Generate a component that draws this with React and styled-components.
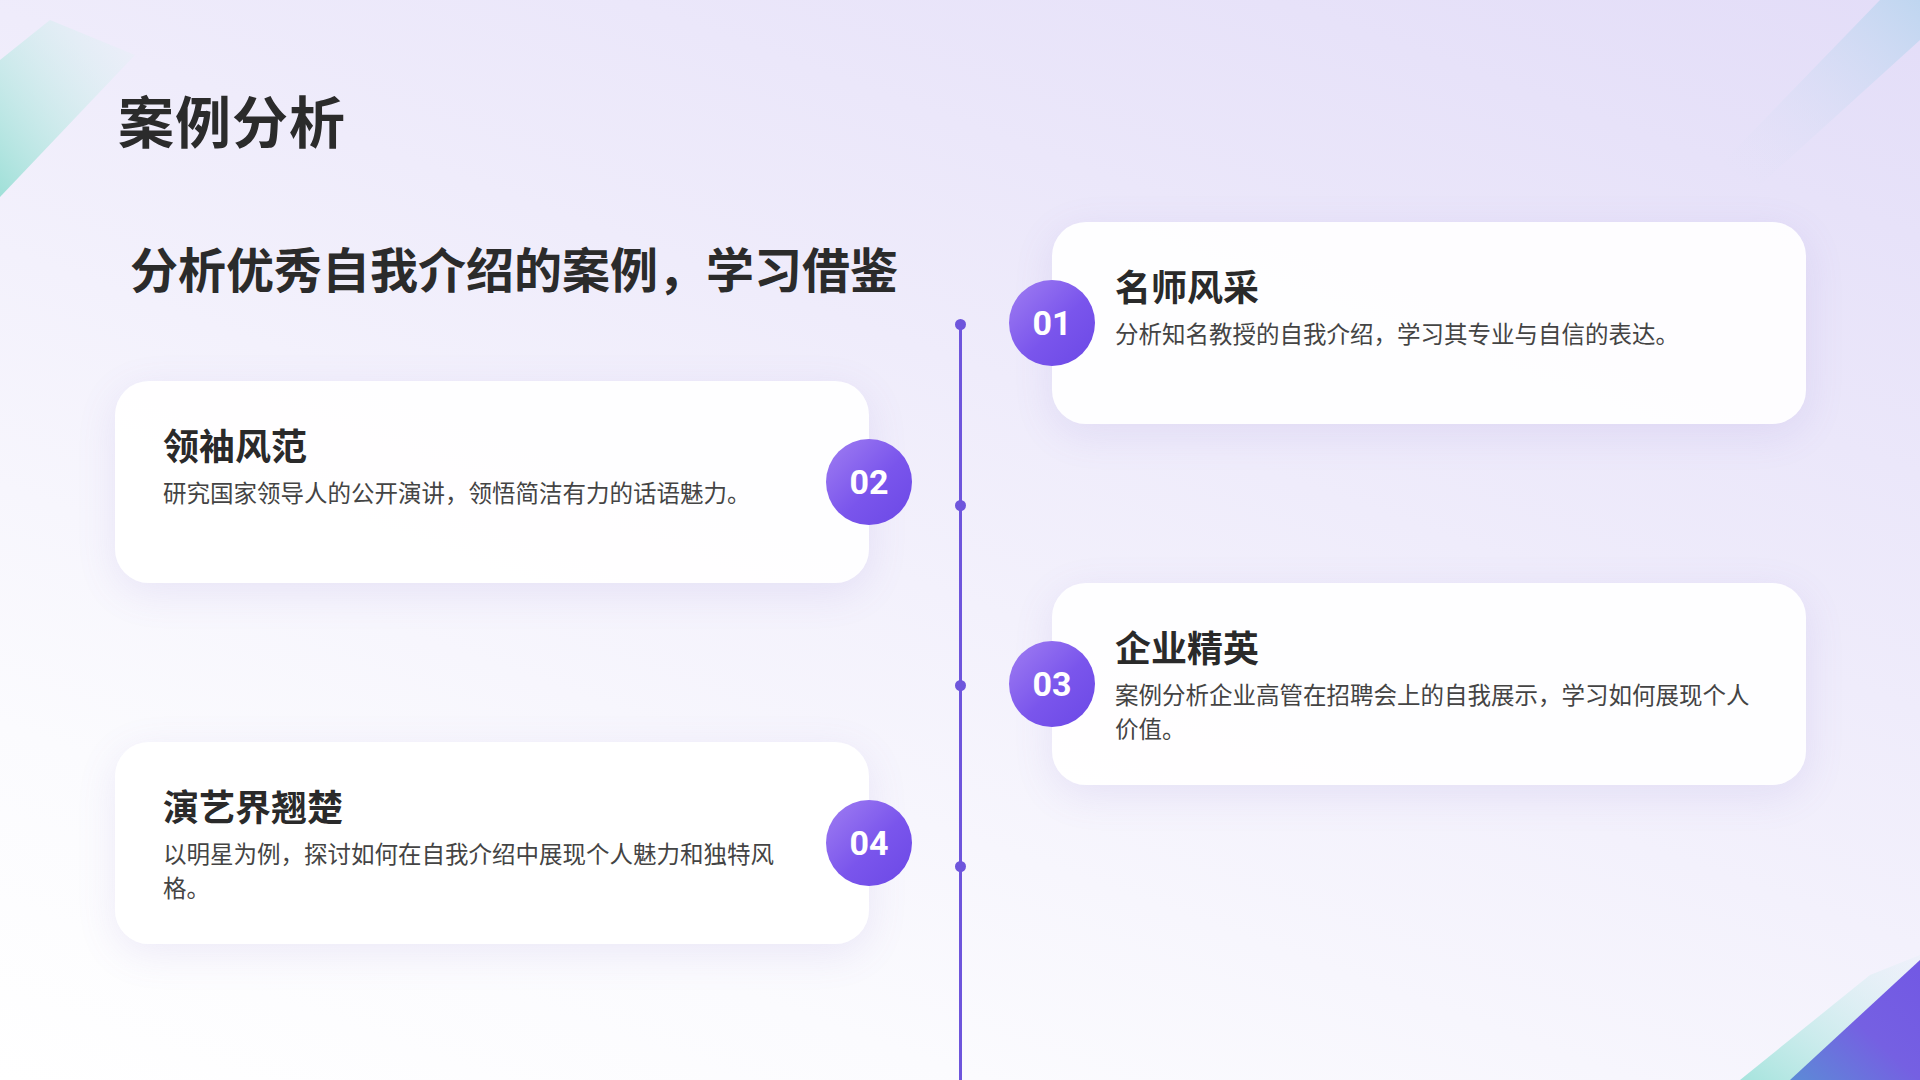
import React from "react";
import styled, { createGlobalStyle } from "styled-components";

const Global = createGlobalStyle`
  html, body { margin: 0; padding: 0; }
  body { font-family: "Noto Sans CJK SC", "Noto Sans", sans-serif; }
`;

const Page = styled.div`
  position: relative;
  width: 1920px;
  height: 1080px;
  overflow: hidden;
  background: linear-gradient(200deg, #e3ddf8 0%, #efecfb 40%, #fbfbfe 80%, #ffffff 100%);
  color: #2b2b2b;
`;

const Deco = styled.svg`
  position: absolute;
  pointer-events: none;
`;

const Content = styled.div`
  position: relative;
  padding: 84px 0 0 118px;
`;

const Title = styled.h1`
  margin: 0;
  font-size: 56px;
  font-weight: 700;
  line-height: 70px;
  letter-spacing: 1px;
`;

const Timeline = styled.div`
  display: grid;
  grid-template-columns: 754px 183px 754px;
  margin-left: -3px;
  margin-top: 68px;
`;

const Column = styled.div`
  display: flex;
  flex-direction: column;
  gap: 159px;
`;

const Subtitle = styled.h2`
  margin: 15px 0 0 15px;
  font-size: 48px;
  font-weight: 700;
  line-height: 60px;
  white-space: nowrap;
`;

const Card = styled.div`
  position: relative;
  height: 202px;
  box-sizing: border-box;
  background: rgba(255, 255, 255, 0.92);
  border-radius: 34px;
  box-shadow: 0 10px 40px rgba(120, 100, 200, 0.12);
  padding: ${(p) => (p.$side === "right" ? "38px 56px 0 63px" : "38px 70px 0 48px")};
`;

const CardTitle = styled.div`
  font-size: 36px;
  font-weight: 700;
  line-height: 50px;
  color: #2a2a2a;
`;

const CardText = styled.div`
  margin-top: 6px;
  font-size: 23.5px;
  line-height: 34px;
  color: #444;
`;

const Badge = styled.div`
  position: absolute;
  top: 58px;
  ${(p) => (p.$side === "right" ? "left: -43px;" : "right: -43px;")}
  width: 86px;
  height: 86px;
  border-radius: 50%;
  background: linear-gradient(135deg, #a07ef2 0%, #7a55ec 55%, #6b48e6 100%);
  display: flex;
  align-items: center;
  justify-content: center;
  color: #fff;
  font-family: Roboto, "Liberation Sans", sans-serif;
  font-weight: 700;
  font-size: 34px;
`;

const LineCol = styled.div`
  position: relative;
`;

const Line = styled.div`
  position: absolute;
  left: 90px;
  top: 101px;
  bottom: -200px;
  width: 3px;
  background: #6e55dc;
`;

const Dot = styled.div`
  position: absolute;
  left: 86px;
  width: 11px;
  height: 11px;
  border-radius: 50%;
  background: #6e55dc;
`;

const items = {
  right: [
    { n: "01", t: "名师风采", d: "分析知名教授的自我介绍，学习其专业与自信的表达。" },
    { n: "03", t: "企业精英", d: "案例分析企业高管在招聘会上的自我展示，学习如何展现个人价值。" },
  ],
  left: [
    { n: "02", t: "领袖风范", d: "研究国家领导人的公开演讲，领悟简洁有力的话语魅力。" },
    { n: "04", t: "演艺界翘楚", d: "以明星为例，探讨如何在自我介绍中展现个人魅力和独特风格。" },
  ],
};

export default function App() {
  return (
    <Page>
      <Global />
      <Deco width="140" height="200" style={{ left: 0, top: 0 }} viewBox="0 0 140 200">
        <defs>
          <linearGradient id="tl" x1="0" y1="1" x2="1" y2="0">
            <stop offset="0" stopColor="#9fe0d8" />
            <stop offset="1" stopColor="#e7f4f6" stopOpacity="0.2" />
          </linearGradient>
        </defs>
        <polygon points="0,60 50,20 135,55 0,197" fill="url(#tl)" />
      </Deco>
      <Deco width="240" height="190" style={{ right: 0, top: 0 }} viewBox="0 0 240 190">
        <defs>
          <linearGradient id="tr" x1="1" y1="0" x2="0" y2="1">
            <stop offset="0" stopColor="#bfd6f0" />
            <stop offset="1" stopColor="#e6e2f8" stopOpacity="0" />
          </linearGradient>
        </defs>
        <polygon points="200,0 240,0 240,40 80,185 40,165" fill="url(#tr)" />
      </Deco>
      <Deco width="180" height="125" style={{ right: 0, bottom: 0 }} viewBox="0 0 180 125">
        <defs>
          <linearGradient id="br1" x1="0" y1="1" x2="1" y2="0">
            <stop offset="0" stopColor="#a6e4dd" />
            <stop offset="1" stopColor="#d9eef3" stopOpacity="0.2" />
          </linearGradient>
          <linearGradient id="br2" x1="0" y1="1" x2="1" y2="0">
            <stop offset="0" stopColor="#5c8bd6" />
            <stop offset="0.5" stopColor="#7560e2" />
            <stop offset="1" stopColor="#7258e4" />
          </linearGradient>
        </defs>
        <polygon points="0,125 130,20 180,0 180,125" fill="url(#br1)" />
        <polygon points="50,125 180,5 180,125" fill="url(#br2)" />
      </Deco>
      <Content>
        <Title>案例分析</Title>
        <Timeline>
          <Column>
            <Subtitle>分析优秀自我介绍的案例，学习借鉴</Subtitle>
            {items.left.map((it, i) => (
              <Card key={it.n} $side="left" style={i === 0 ? { marginTop: -75 } : undefined}>
                <CardTitle>{it.t}</CardTitle>
                <CardText>{it.d}</CardText>
                <Badge $side="left">{it.n}</Badge>
              </Card>
            ))}
          </Column>
          <LineCol>
            <Line />
            {[101, 282, 462, 643].map((y) => (
              <Dot key={y} style={{ top: y - 4 }} />
            ))}
          </LineCol>
          <Column>
            {items.right.map((it) => (
              <Card key={it.n} $side="right">
                <CardTitle>{it.t}</CardTitle>
                <CardText>{it.d}</CardText>
                <Badge $side="right">{it.n}</Badge>
              </Card>
            ))}
          </Column>
        </Timeline>
      </Content>
    </Page>
  );
}
